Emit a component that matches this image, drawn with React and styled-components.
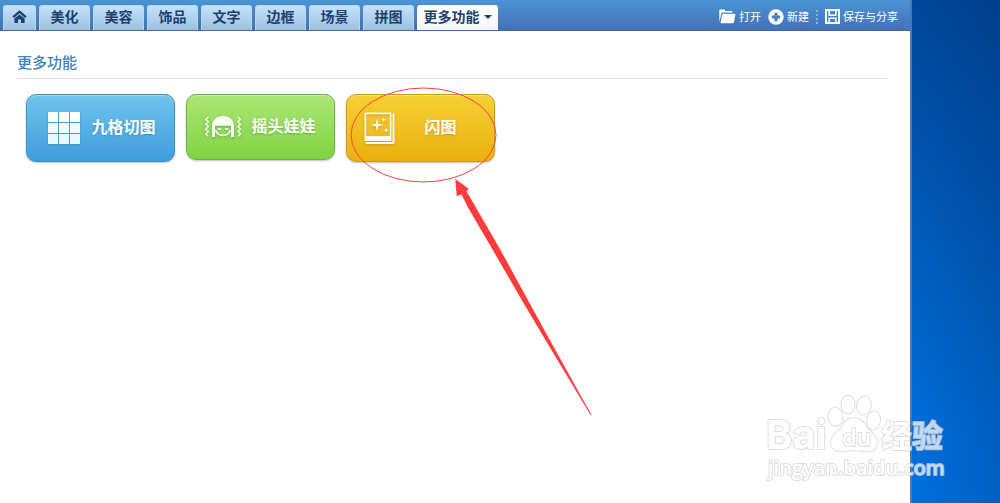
import React from "react";
import styled, { createGlobalStyle } from "styled-components";

const GlobalStyle = createGlobalStyle`
  * {
    box-sizing: border-box;
  }
  body {
    margin: 0;
    font-family: "Liberation Sans", "Noto Sans CJK SC", sans-serif;
  }
  button {
    font-family: inherit;
    margin: 0;
    cursor: pointer;
  }
`;

const Desktop = styled.div`
  position: relative;
  display: flex;
  min-height: 100vh;
  padding-right: 88px;
  overflow: hidden;
  background:
    linear-gradient(to right, rgba(0, 30, 80, 0) 91%, rgba(0, 30, 80, 0.2) 100%),
    linear-gradient(#00479a 0%, #0054b0 30%, #0064c8 62%, #006edc 86%, #0070df 100%);
`;

const Window = styled.div`
  position: relative;
  flex: 1;
  display: flex;
  flex-direction: column;
  background: #ffffff;
  border-right: 2px solid #4d77b4;
`;

const Header = styled.header`
  display: flex;
  justify-content: space-between;
  align-items: flex-end;
  padding: 5px 12px 0 3px;
  background: linear-gradient(#4a94d4, #4570b7);
  border-bottom: 1px solid #4169a8;
`;

const Tabs = styled.nav`
  display: flex;
  gap: 3px;
`;

const Tab = styled.button`
  display: flex;
  align-items: center;
  justify-content: center;
  gap: 4px;
  width: ${(props) => props.$width || 51}px;
  height: 25px;
  padding: 0 0 2px;
  border: 1px solid ${(props) => (props.$active ? "#f4f8fc" : "#b5d8f5")};
  border-bottom: none;
  border-radius: 3px 3px 0 0;
  background: ${(props) =>
    props.$active
      ? "linear-gradient(#ffffff, #f5f6f8)"
      : "linear-gradient(#c3e2fc, #9dc1de)"};
  color: #1f3f6e;
  font-size: 14px;
  font-weight: bold;
  line-height: 20px;
  white-space: nowrap;
`;

const Caret = styled.span`
  border: 4px solid transparent;
  border-top-color: #1f3f6e;
  border-bottom: none;
`;

const Tools = styled.div`
  display: flex;
  align-items: center;
  gap: 7px;
  height: 25px;
  padding-bottom: 2px;
`;

const Tool = styled.button`
  display: flex;
  align-items: center;
  gap: 3px;
  padding: 0;
  border: none;
  background: none;
  color: #ffffff;
  font-size: 11px;
  line-height: 16px;
  white-space: nowrap;
`;

const Divider = styled.span`
  height: 14px;
  border-left: 2px dotted #86b0df;
`;

const Content = styled.main`
  flex: 1;
  padding: 20px 23px 0 17px;
`;

const Title = styled.h2`
  margin: 0;
  padding-bottom: 6px;
  border-bottom: 1px solid #dedede;
  color: #3d82b8;
  font-family: "Noto Sans CJK SC", sans-serif;
  font-size: 15px;
  font-weight: 500;
  line-height: 21px;
`;

const Cards = styled.div`
  display: flex;
  align-items: flex-start;
  gap: 11px;
  padding: 15px 9px;
`;

const Card = styled.button`
  display: flex;
  align-items: center;
  gap: 2px;
  width: 149px;
  height: ${(props) => props.$height}px;
  padding: 0 13px 0 18px;
  border: 1px solid ${(props) => props.$edge};
  border-radius: 10px;
  background: linear-gradient(${(props) => props.$from}, ${(props) => props.$to});
  box-shadow:
    inset 0 1px 1px rgba(255, 255, 255, 0.35),
    0 1px 2px rgba(0, 0, 0, 0.25);
  color: #ffffff;
  font-size: 16px;
  font-weight: bold;
  line-height: 24px;
  text-shadow: 0 1px 2px ${(props) => props.$edge};

  svg {
    flex: none;
    margin-left: -1px;
    filter: drop-shadow(0 1px 1px ${(props) => props.$edge});
  }
`;

const CardLabel = styled.span`
  flex: 1;
  text-align: center;
  white-space: nowrap;
`;

const Annotation = styled.svg`
  position: absolute;
  top: 0;
  left: 0;
  pointer-events: none;
`;

const Watermark = styled.svg`
  position: absolute;
  right: 50px;
  bottom: 18px;
  pointer-events: none;
`;

const HomeIcon = () => (
  <svg width="15" height="14" viewBox="0 0 15 14" fill="#1f3f6e">
    <path d="M7.5 0.3 0.4 6.3 1.9 8 7.5 3.2 13.1 8 14.6 6.3Z" />
    <path d="M7.5 4.4 2.4 8.6V13H6V9.6H9V13H12.6V8.6Z" />
  </svg>
);

const FolderIcon = () => (
  <svg width="17" height="15" viewBox="0 0 17 15" fill="#ffffff">
    <path d="M0.3 13V1.6Q0.3 0.5 1.4 0.5H5.2L6.6 2H12.6Q13.6 2 13.6 3V3.6H4Q2.6 3.6 2.3 4.9Z" />
    <path d="M4.4 4.8H15.6Q16.6 4.8 16.4 5.8L14.9 13.3Q14.7 14.3 13.7 14.3H2.3Q1.3 14.3 1.6 13.3L3.2 5.7Q3.4 4.8 4.4 4.8Z" />
  </svg>
);

const PlusIcon = () => (
  <svg width="16" height="16" viewBox="0 0 16 16">
    <circle cx="8" cy="8" r="7.7" fill="#ffffff" />
    <path d="M8 3.8V12.2M3.8 8H12.2" stroke="#4380c3" strokeWidth="3" />
  </svg>
);

const SaveIcon = () => (
  <svg width="15" height="15" viewBox="0 0 15 15" fill="none" stroke="#ffffff">
    <path d="M1 1H14V14H1Z" strokeWidth="2" />
    <path d="M4.2 1V6.2H10.8V1" strokeWidth="1.6" />
    <path d="M4.2 14V9.2H10.8V14" strokeWidth="1.6" />
  </svg>
);

const GridIcon = () => (
  <svg width="40" height="34" viewBox="0 0 40 34">
    {[0, 1, 2].map((row) =>
      [0, 1, 2].map((col) => (
        <rect
          key={`${row}-${col}`}
          x={4 + col * 11}
          y={1 + row * 11}
          width="10"
          height="10"
          fill={["#ffffff", "#f0fcff", "#e4fafe"][row]}
        />
      ))
    )}
  </svg>
);

const DollIcon = () => (
  <svg width="40" height="26" viewBox="0 0 40 26" fill="none" stroke="#fbfff2">
    <path
      d="M4.3 3 1.9 5.4 4.3 7.8 1.9 10.2 4.3 12.6 1.9 15 4.3 17.4 1.9 19.8 4 22.4"
      strokeWidth="1.5"
    />
    <path
      d="M34 3 36.4 5.4 34 7.8 36.4 10.2 34 12.6 36.4 15 34 17.4 36.4 19.8 34.3 22.4"
      strokeWidth="1.5"
    />
    <path
      d="M8 23V12.6C8 5.5 12.5 2 19 2S30 5.5 30 12.6V23H27V11.8H11V23Z"
      fill="#fbfff2"
      stroke="none"
    />
    <path d="M11.4 16Q13.5 21.4 19 21.4T26.6 16" strokeWidth="1.6" />
    <path d="M13.8 14.8H16.8M21.2 14.8H24.2" strokeWidth="1.8" />
  </svg>
);

const PhotoIcon = () => (
  <svg width="34" height="34" viewBox="0 0 34 34" fill="#fffbe8">
    <path
      fillRule="evenodd"
      d="M0.5 1.5H27.5V30H0.5ZM2.3 3.3V25H25.7V3.3Z"
    />
    <path d="M28.5 2.5H30.5V33H1.5V31H28.5Z" />
    <path d="M13 7.5 14.3 12.7 19.5 14 14.3 15.3 13 20.5 11.7 15.3 6.5 14 11.7 12.7Z" />
    <path d="M19.7 5.9 20.4 8 22.5 8.7 20.4 9.4 19.7 11.5 19 9.4 16.9 8.7 19 8Z" />
    <path d="M22.2 16.4 22.9 18.5 25 19.2 22.9 19.9 22.2 22 21.5 19.9 19.4 19.2 21.5 18.5Z" />
  </svg>
);

const tabs = ["美化", "美容", "饰品", "文字", "边框", "场景", "拼图"];

const cards = [
  { name: "九格切图", icon: <GridIcon />, height: 68, from: "#70c4ec", to: "#3f9cdc", edge: "#3c93bd" },
  { name: "摇头娃娃", icon: <DollIcon />, height: 66, from: "#abe774", to: "#80d244", edge: "#6bb04a" },
  { name: "闪图", icon: <PhotoIcon />, height: 68, from: "#f7d033", to: "#eab010", edge: "#c99a1c" },
];

const App = () => {
  return (
    <Desktop>
      <GlobalStyle />
      <Window>
        <Header>
          <Tabs>
            <Tab $width={33} aria-label="首页">
              <HomeIcon />
            </Tab>
            {tabs.map((name) => (
              <Tab key={name}>{name}</Tab>
            ))}
            <Tab $width={81} $active>
              更多功能
              <Caret />
            </Tab>
          </Tabs>
          <Tools>
            <Tool>
              <FolderIcon />
              打开
            </Tool>
            <Tool>
              <PlusIcon />
              新建
            </Tool>
            <Divider />
            <Tool>
              <SaveIcon />
              保存与分享
            </Tool>
          </Tools>
        </Header>
        <Content>
          <Title>更多功能</Title>
          <Cards>
            {cards.map((card) => (
              <Card
                key={card.name}
                $height={card.height}
                $from={card.from}
                $to={card.to}
                $edge={card.edge}
              >
                {card.icon}
                <CardLabel>{card.name}</CardLabel>
              </Card>
            ))}
          </Cards>
        </Content>
        <Annotation width="600" height="420" viewBox="0 0 600 420">
          <ellipse cx="423.5" cy="135" rx="72.5" ry="47" fill="none" stroke="#ff4040" />
          <path
            d="M455.3 179 468.7 188.8 466.5 191.2 475.5 206.7 500.5 250 529.5 303 548 336.7 591.5 415H590.5L543.5 336.7 523.5 303 492.8 250 468 207.5 461.5 194.5 456.7 196Z"
            fill="#ff3b3b"
          />
        </Annotation>
      </Window>
      <Watermark
        width="184"
        height="92"
        viewBox="0 0 184 92"
        fill="#ffffff"
        stroke="#d4d4d4"
        strokeLinejoin="round"
        paintOrder="stroke"
        opacity="0.75"
      >
        <text x="0" y="56" fontFamily="Inter, sans-serif" fontSize="40" fontWeight="bold" strokeWidth="2">
          Bai
        </text>
        <g strokeWidth="2">
          <ellipse cx="69.5" cy="24" rx="7" ry="9" transform="rotate(-8 69.5 24)" />
          <ellipse cx="82" cy="11.5" rx="6.5" ry="9" />
          <ellipse cx="98" cy="12.5" rx="7" ry="9" transform="rotate(8 98 12.5)" />
          <ellipse cx="107.5" cy="27.5" rx="6.5" ry="9" transform="rotate(10 107.5 27.5)" />
          <path d="M88 25C96 25 98 31 103 37C108 42 112 45 111 51C110 57 105 59 98 58C91 57 84 57 78 58C71 59 66 57 65 50C65 44 69 41 74 36C78 31 80 25 88 25Z" />
        </g>
        <text x="76" y="53" fontFamily="Inter, sans-serif" fontSize="24" fontWeight="500" strokeWidth="2">
          du
        </text>
        <text x="115" y="54" fontFamily="Noto Sans CJK SC, sans-serif" fontSize="31" fontWeight="bold" strokeWidth="2">
          经验
        </text>
        <text x="2" y="82" fontFamily="Open Sans, sans-serif" fontSize="20" fontWeight="600" strokeWidth="2">
          jingyan.baidu.com
        </text>
      </Watermark>
    </Desktop>
  );
};

export default App;
